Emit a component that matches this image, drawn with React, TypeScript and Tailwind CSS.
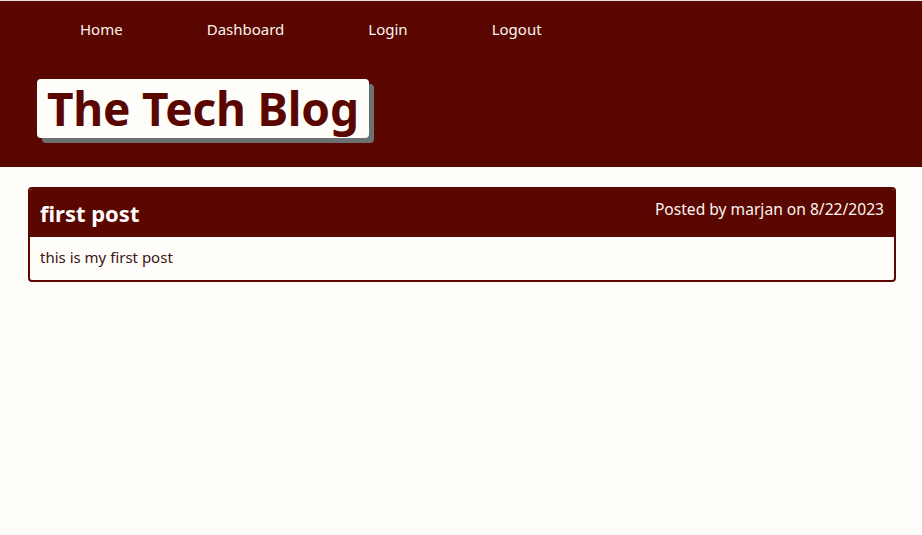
import React from 'react';

const links = ['Home', 'Dashboard', 'Login', 'Logout'];

export default function App() {
  return (
    <div
      className="min-h-screen bg-[#fffdf9] border-t border-[#e8e4dc]"
      style={{ fontFamily: '"Noto Sans", "Open Sans", sans-serif' }}
    >
      {/* Header */}
      <header className="bg-[#590700] h-[166px] flex flex-col">
        <nav className="flex gap-[84px] pl-[80px] pt-[23px] h-[33px] items-center">
          {links.map((l) => (
            <a key={l} className="text-[15px] text-[#fdf4ee] leading-none">
              {l}
            </a>
          ))}
        </nav>
        <div className="pl-[37px] pt-[45px]">
          <h1 className="inline-block bg-[#fffdf9] text-[#590700] rounded-[4px] shadow-[5px_5px_0_#6b7171] text-[46px] font-bold leading-[59px] px-[10px] tracking-[-0.2px]">
            The Tech Blog
          </h1>
        </div>
      </header>

      {/* Posts */}
      <main className="pl-[28px] pr-[26px] pt-[20px]">
        <article className="border-2 border-[#590700] rounded-[4px] overflow-hidden">
          <div className="bg-[#590700] h-[48px] flex items-center justify-between px-[10px]">
            <h2 className="text-[22px] font-bold text-[#fffdf9] leading-none">first post</h2>
            <p className="text-[15.6px] text-[#fdf4ee] leading-none -mt-[6px]">
              Posted by marjan on 8/22/2023
            </p>
          </div>
          <div className="h-[43px] flex items-center px-[10px]">
            <p className="text-[15px] text-[#3a1410] leading-none -mt-[2px]">this is my first post</p>
          </div>
        </article>
      </main>
    </div>
  );
}
